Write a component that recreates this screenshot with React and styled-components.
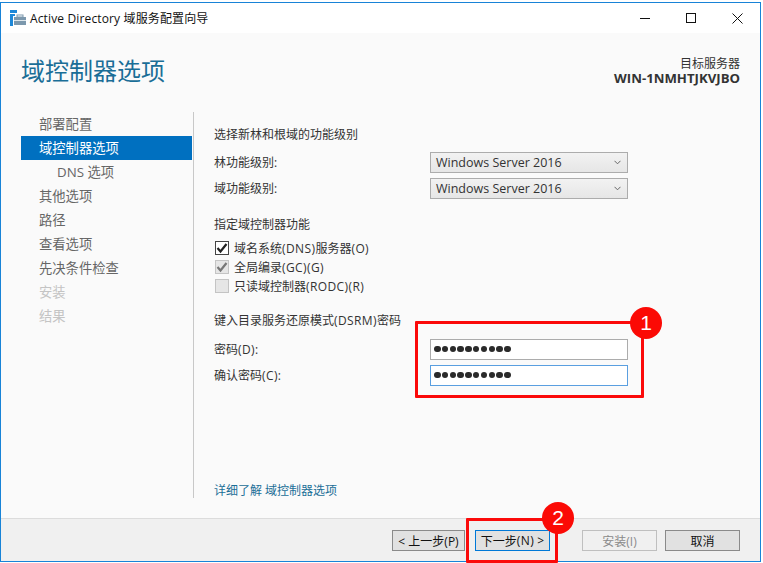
import styled, { createGlobalStyle } from "styled-components";

const GlobalStyle = createGlobalStyle`
  html, body { margin: 0; padding: 0; background: #ffffff; }
  body { font-family: "Open Sans", "Noto Sans CJK SC", sans-serif; }
  * { box-sizing: border-box; }
`;

const Page = styled.div`
  position: relative;
  width: 763px;
  height: 563px;
  padding-top: 2px;
  overflow: hidden;
`;

const Window = styled.div`
  width: 761px;
  height: 560px;
  border: 1px solid #1883d7;
  display: flex;
  flex-direction: column;
  background: #fafafa;
  color: #333;
`;

const TitleBar = styled.div`
  height: 30px;
  flex: none;
  background: #fff;
  display: flex;
  align-items: center;
  padding-left: 9px;
  color: #111;
  font-size: 12px;
`;

const TitleText = styled.span`
  margin-left: 4px;
  flex: 1;
  letter-spacing: 0.14px;
`;

const WinButton = styled.div`
  width: 46px;
  height: 30px;
  display: flex;
  align-items: center;
  justify-content: center;
`;

const Header = styled.div`
  height: 79px;
  flex: none;
  display: flex;
  justify-content: space-between;
  padding: 19px 20px 0 20px;
`;

const Heading = styled.h1`
  margin: 0;
  font-size: 24px;
  line-height: 38px;
  font-weight: 400;
  color: #1a6e97;
`;

const Target = styled.div`
  text-align: right;
  font-size: 12px;
  line-height: 15px;
  padding-top: 4px;
  color: #333;
`;

const TargetName = styled.div`
  font-size: 13.2px;
  font-weight: 700;
`;

const Main = styled.div`
  display: flex;
  height: 386px;
  flex: none;
`;

const Nav = styled.nav`
  width: 171px;
  margin-left: 20px;
`;

const NavItem = styled.div`
  height: 24px;
  line-height: 24px;
  font-size: 13.3px;
  padding-left: ${(p) => (p.$sub ? 36 : 18)}px;
  background: ${(p) => (p.$active ? "#0070c0" : "transparent")};
  color: ${(p) => (p.$active ? "#fff" : p.$off ? "#c4c4c4" : "#666")};
`;

const Divider = styled.div`
  width: 1px;
  margin-left: 1px;
  background: #c8c8c8;
`;

const Content = styled.div`
  flex: 1;
  padding: 14px 0 0 20px;
  font-size: 12px;
  display: flex;
  flex-direction: column;
`;

const SectionTitle = styled.div`
  line-height: 18px;
  margin-top: ${(p) => p.$top || 0}px;
`;

const Latin = styled.span`
  letter-spacing: 0.4px;
`;

const FieldRow = styled.div`
  display: flex;
  align-items: center;
  height: 26px;
  margin-top: ${(p) => p.$top || 0}px;
`;

const FieldLabel = styled.label`
  width: 216px;
`;

const Select = styled.div`
  width: 198px;
  height: 21px;
  border: 1px solid #acacac;
  background: linear-gradient(#f2f2f2, #e6e6e6);
  display: flex;
  align-items: center;
  justify-content: space-between;
  padding: 0 6px 0 5px;
  font-size: 12.5px;
  color: #333;
`;

const PasswordBox = styled.div`
  width: 198px;
  height: 21px;
  border: 1px solid ${(p) => (p.$focus ? "#5a9fe0" : "#acacac")};
  background: #fff;
  display: flex;
  align-items: center;
  gap: 1.3px;
  padding-left: 3px;
`;

const Dot = styled.span`
  width: 6.5px;
  height: 6.5px;
  border-radius: 50%;
  background: #2a2a2a;
`;

const CheckRow = styled.div`
  display: flex;
  align-items: center;
  height: 19px;
  gap: 5px;
  margin-left: 1px;
  margin-top: ${(p) => p.$top || 0}px;
`;

const CheckBox = styled.div`
  width: 14px;
  height: 14px;
  border: 1px solid ${(p) => (p.$on ? "#444" : "#c4c4c4")};
  background: ${(p) => (p.$on ? "#fff" : "#e6e6e6")};
  display: flex;
  align-items: center;
  justify-content: center;
`;

const LearnMore = styled.a`
  margin-top: auto;
  height: 15px;
  line-height: 15px;
  color: #1a6e97;
`;

const Footer = styled.div`
  flex: 1;
  background: #f0f0f0;
  border-top: 1px solid #dcdcdc;
  margin-top: 20px;
  display: flex;
  align-items: flex-start;
  padding: 11px 20px 0 391px;
`;

const FooterButton = styled.div`
  width: ${(p) => p.$w}px;
  height: 21px;
  margin-right: ${(p) => p.$mr || 0}px;
  border: 1px solid ${(p) => (p.$off ? "#bfbfbf" : p.$primary ? "#0078d7" : "#8a8a8a")};
  background: ${(p) => (p.$off ? "#f0f0f0" : "#e1e1e1")};
  color: ${(p) => (p.$off ? "#8a8a8a" : "#111")};
  font-size: 12px;
  display: flex;
  align-items: center;
  justify-content: center;
  white-space: pre;
`;

const Callout = styled.div`
  position: absolute;
  left: ${(p) => p.$x}px;
  top: ${(p) => p.$y}px;
  width: ${(p) => p.$w}px;
  height: ${(p) => p.$h}px;
  border: 3px solid #fb0a0a;
  border-radius: 1px;
`;

const Badge = styled.div`
  position: absolute;
  left: ${(p) => p.$x}px;
  top: ${(p) => p.$y}px;
  width: 32px;
  height: 32px;
  border-radius: 50%;
  background: #fb0a05;
  color: #fff;
  font-size: 21px;
  font-family: "Liberation Sans", sans-serif;
  display: flex;
  align-items: center;
  justify-content: center;
`;

const Dots = () => (
  <>
    {Array.from({ length: 10 }, (_, i) => (
      <Dot key={i} />
    ))}
  </>
);

const Chevron = () => (
  <svg width="7" height="5" viewBox="0 0 7 5" fill="none" stroke="#666" strokeWidth="1">
    <path d="M0.5 0.8 L3.5 3.8 L6.5 0.8" />
  </svg>
);

const Tick = ({ color }) => (
  <svg width="12" height="12" viewBox="0 0 12 12" fill="none" stroke={color} strokeWidth="2.2">
    <path d="M1.5 6 L4.5 9.5 L10.5 2" />
  </svg>
);

const AppIcon = () => (
  <svg width="16" height="16" viewBox="0 0 16 16">
    <rect x="0" y="0" width="7" height="3" fill="#1e88d8" />
    <rect x="0" y="4" width="5" height="2" fill="#1e88d8" />
    <rect x="0" y="6" width="3" height="10" fill="#1e88d8" />
    <rect x="4" y="7" width="12" height="8" fill="#7c98ad" />
    <rect x="7" y="5" width="6" height="2" fill="none" stroke="#7c98ad" />
    <rect x="4" y="10" width="12" height="1" fill="#dfe7ec" />
  </svg>
);

const App = () => {
  return (
    <Page>
      <GlobalStyle />
      <Window>
        <TitleBar>
          <AppIcon />
          <TitleText>Active Directory 域服务配置向导</TitleText>
          <WinButton>
            <svg width="11" height="11" viewBox="0 0 11 11" stroke="#111">
              <path d="M0 5.5 H10" />
            </svg>
          </WinButton>
          <WinButton>
            <svg width="11" height="11" viewBox="0 0 11 11" fill="none" stroke="#111">
              <rect x="0.5" y="0.5" width="9" height="9" />
            </svg>
          </WinButton>
          <WinButton>
            <svg width="11" height="11" viewBox="0 0 11 11" stroke="#111">
              <path d="M0.5 0.5 L10.5 10.5 M10.5 0.5 L0.5 10.5" />
            </svg>
          </WinButton>
        </TitleBar>
        <Header>
          <Heading>域控制器选项</Heading>
          <Target>
            <div>目标服务器</div>
            <TargetName>WIN-1NMHTJKVJBO</TargetName>
          </Target>
        </Header>
        <Main>
          <Nav>
            <NavItem>部署配置</NavItem>
            <NavItem $active>域控制器选项</NavItem>
            <NavItem $sub>DNS 选项</NavItem>
            <NavItem>其他选项</NavItem>
            <NavItem>路径</NavItem>
            <NavItem>查看选项</NavItem>
            <NavItem>先决条件检查</NavItem>
            <NavItem $off>安装</NavItem>
            <NavItem $off>结果</NavItem>
          </Nav>
          <Divider />
          <Content>
            <SectionTitle>选择新林和根域的功能级别</SectionTitle>
            <FieldRow $top={5}>
              <FieldLabel>林功能级别:</FieldLabel>
              <Select>
                Windows Server 2016
                <Chevron />
              </Select>
            </FieldRow>
            <FieldRow>
              <FieldLabel>域功能级别:</FieldLabel>
              <Select>
                Windows Server 2016
                <Chevron />
              </Select>
            </FieldRow>
            <SectionTitle $top={15}>指定域控制器功能</SectionTitle>
            <CheckRow $top={4}>
              <CheckBox $on>
                <Tick color="#222" />
              </CheckBox>
              <span>域名系统<Latin>(DNS)</Latin>服务器<Latin>(O)</Latin></span>
            </CheckRow>
            <CheckRow>
              <CheckBox>
                <Tick color="#777" />
              </CheckBox>
              <span>全局编录<Latin>(GC)(G)</Latin></span>
            </CheckRow>
            <CheckRow>
              <CheckBox />
              <span>只读域控制器<Latin>(RODC)(R)</Latin></span>
            </CheckRow>
            <SectionTitle $top={17}>键入目录服务还原模式<Latin>(DSRM)</Latin>密码</SectionTitle>
            <FieldRow $top={6}>
              <FieldLabel>密码<Latin>(D):</Latin></FieldLabel>
              <PasswordBox>
                <Dots />
              </PasswordBox>
            </FieldRow>
            <FieldRow>
              <FieldLabel>确认密码<Latin>(C):</Latin></FieldLabel>
              <PasswordBox $focus>
                <Dots />
              </PasswordBox>
            </FieldRow>
            <LearnMore>详细了解 域控制器选项</LearnMore>
          </Content>
        </Main>
        <Footer>
          <FooterButton $w={73} $mr={10}>&lt; 上一步(P)</FooterButton>
          <FooterButton $w={75} $primary $mr={32}>下一步<Latin>(N)</Latin> &gt;</FooterButton>
          <FooterButton $w={75} $off $mr={8}>安装(I)</FooterButton>
          <FooterButton $w={75}>取消</FooterButton>
        </Footer>
      </Window>
      <Callout $x={415} $y={321} $w={229} $h={77} />
      <Badge $x={630} $y={307}>1</Badge>
      <Callout $x={466} $y={518} $w={92} $h={45} />
      <Badge $x={542} $y={502}>2</Badge>
    </Page>
  );
};

export default App;
